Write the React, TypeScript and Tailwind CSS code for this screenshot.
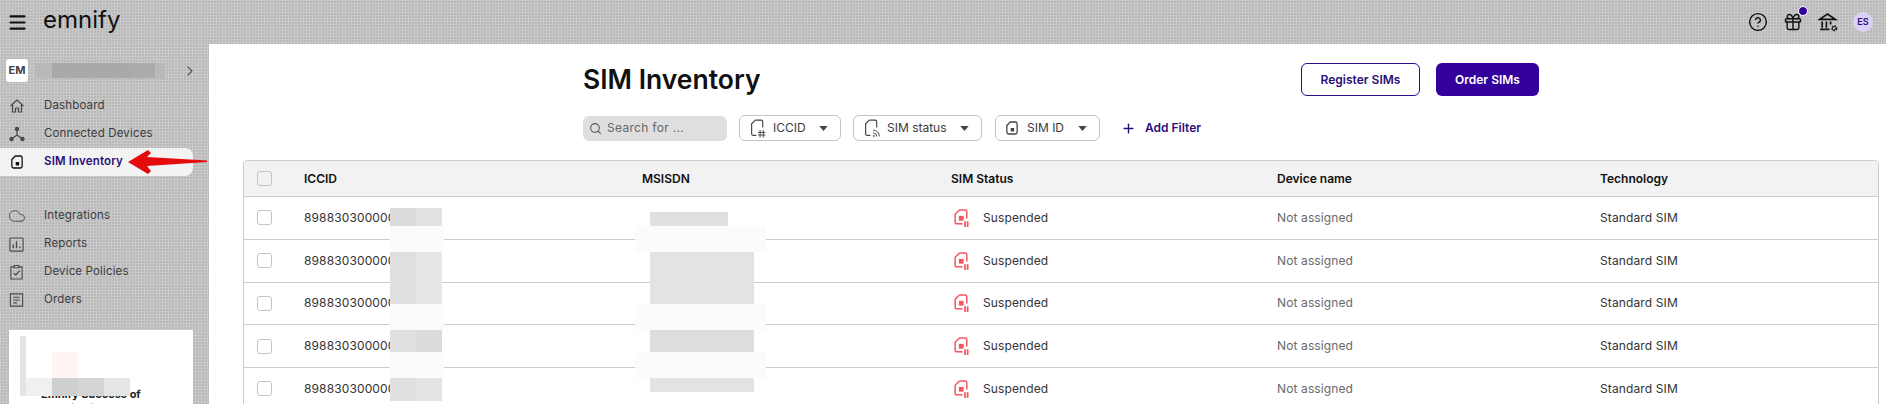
import { ChevronRight, CircleHelp, Cloud, Gift, Menu, Plus, Search } from "lucide-react";

const dotted =
  "bg-[#b8b8b8] bg-[linear-gradient(#c9c9c9_1px,transparent_1px),linear-gradient(90deg,#c9c9c9_1px,transparent_1px)] bg-[length:3px_3px]";

function SimIcon({ className = "" }: { className?: string }) {
  return (
    <svg viewBox="0 0 14 16" className={className} fill="none" stroke="currentColor" strokeWidth="1.5">
      <path d="M5 1h6a2 2 0 0 1 2 2v10a2 2 0 0 1-2 2H3a2 2 0 0 1-2-2V5z" strokeLinejoin="round" />
      <rect x="5.5" y="8" width="4" height="4" fill="currentColor" stroke="none" />
    </svg>
  );
}

function HomeIcon() {
  return (
    <svg viewBox="0 0 16 16" className="w-[16px] h-[16px]" fill="none" stroke="#4a4a4a" strokeWidth="1.2">
      <path d="M1.5 8 8 2l6.5 6M3.5 6.5V14h3v-4h3v4h3V6.5" strokeLinejoin="round" />
    </svg>
  );
}

function NodesIcon() {
  return (
    <svg viewBox="0 0 16 16" className="w-[16px] h-[16px]" fill="#4a4a4a" stroke="#4a4a4a" strokeWidth="1.2">
      <circle cx="8" cy="3" r="1.6" />
      <circle cx="2.5" cy="13" r="1.6" />
      <circle cx="13.5" cy="13" r="1.6" />
      <path d="M8 3v6M8 9l-5.5 4M8 9l5.5 4" fill="none" />
    </svg>
  );
}

function ReportsIcon() {
  return (
    <svg viewBox="0 0 16 16" className="w-[15px] h-[15px]" fill="none" stroke="#4a4a4a" strokeWidth="1.2">
      <rect x="1" y="1" width="14" height="14" rx="1" />
      <path d="M4.5 12V8M8 12V4.5M11.5 12v-2" strokeWidth="1.4" />
    </svg>
  );
}

function PolicyIcon() {
  return (
    <svg viewBox="0 0 16 16" className="w-[15px] h-[16px]" fill="none" stroke="#4a4a4a" strokeWidth="1.2">
      <path d="M5 2.5H2v13h12v-13h-3M5.5 1h5v2.5h-5z" />
      <path d="m5 9 2.2 2.2L11.5 6.5" strokeWidth="1.3" />
    </svg>
  );
}

function OrdersIcon() {
  return (
    <svg viewBox="0 0 16 16" className="w-[15px] h-[16px]" fill="none" stroke="#4a4a4a" strokeWidth="1.2">
      <path d="M1.5 1.5h13v13h-13z" />
      <path d="M4.5 5h7M4.5 8h7M4.5 11h4" />
    </svg>
  );
}

function BankIcon() {
  return (
    <svg viewBox="0 0 20 20" className="w-[21px] h-[21px]" fill="none" stroke="#111" strokeWidth="1.6">
      <path d="M1.5 7 9 2l7.5 5zM4 9v6M8 9v6M12 9v3M2 16.5h9" />
      <circle cx="15.5" cy="15.5" r="2" strokeWidth="1.8" strokeDasharray="1.5 .6" />
    </svg>
  );
}

function IccidIcon() {
  return (
    <svg viewBox="0 0 16 18" className="w-[17px] h-[19px]" fill="none" stroke="#444" strokeWidth="1.1">
      <path d="M5 1h5.5a1.5 1.5 0 0 1 1.5 1.5V8M5 1 1.5 4.5V14A1.5 1.5 0 0 0 3 15.5h3" />
      <path d="M9.5 10.5v7M12.5 10.5v7M7.5 12.7h7M7.5 15.2h7" strokeWidth=".9" />
    </svg>
  );
}

function StatusIcon() {
  return (
    <svg viewBox="0 0 16 18" className="w-[17px] h-[19px]" fill="none" stroke="#444" strokeWidth="1.1">
      <path d="M5 1h5.5a1.5 1.5 0 0 1 1.5 1.5V8M5 1 1.5 4.5V14A1.5 1.5 0 0 0 3 15.5h3" />
      <path d="M8.5 10.5a6 6 0 0 1 6 6M8.5 13a3.5 3.5 0 0 1 3.5 3.5" strokeWidth=".9" />
      <circle cx="9.3" cy="16" r=".8" fill="#444" stroke="none" />
    </svg>
  );
}

function SuspendedIcon() {
  return (
    <svg viewBox="0 0 14 17" className="w-[15px] h-[18px]" fill="none" stroke="#f4545f" strokeWidth="1.4">
      <path d="M5 1h5.5A1.5 1.5 0 0 1 12 2.5V9M5 1 1 5v7.5A1.5 1.5 0 0 0 2.5 14H8" />
      <rect x="4.5" y="6.5" width="4.5" height="4.5" fill="#f4545f" stroke="none" />
      <rect x="9.5" y="11.5" width="1.6" height="5.5" fill="#f4545f" stroke="none" />
      <rect x="12" y="11.5" width="1.6" height="5.5" fill="#f4545f" stroke="none" />
    </svg>
  );
}

function Caret() {
  return (
    <svg viewBox="0 0 10 6" className="w-[9px] h-[5px]" fill="#444">
      <path d="M0 0h10L5 6z" />
    </svg>
  );
}

function NavItem({ icon, label, active }: { icon: React.ReactNode; label: string; active?: boolean }) {
  return (
    <div
      className={`flex items-center h-[28px] w-[193px] rounded-r-lg ${
        active ? "bg-[#f3f3f3] text-[#2a0e78] font-semibold" : "text-[#3c3c3c]"
      }`}
    >
      <div className="w-[44px] flex justify-center pr-[11px]">{icon}</div>
      <span className="text-[11.5px] tracking-[0.15px]">{label}</span>
    </div>
  );
}

function FilterPill({ icon, label, className }: { icon: React.ReactNode; label: string; className: string }) {
  return (
    <div className={`flex items-center h-[26px] pl-[10px] border border-[#c4c4c4] rounded-md bg-white ${className}`}>
      {icon}
      <span className="ml-[6px] text-[12px] text-[#3c3c3c] flex-1">{label}</span>
      <div className="pr-[12px] flex">
        <Caret />
      </div>
    </div>
  );
}

const rows = [0, 1, 2, 3, 4];

function Cell({ className, children }: { className: string; children: React.ReactNode }) {
  return <div className={`shrink-0 ${className}`}>{children}</div>;
}

export default function App() {
  return (
    <div className="h-[404px] w-full overflow-hidden flex flex-col font-['Inter',sans-serif] bg-white">
      {/* Top bar */}
      <header className={`h-[44px] shrink-0 flex items-center ${dotted}`}>
        <Menu className="ml-[7px] w-[21px] h-[21px] text-[#111]" strokeWidth={2.4} />
        <span className="ml-[15px] text-[24px] leading-none font-normal text-[#111] -mt-[5px]">emnify</span>
        <div className="ml-auto flex items-center gap-[15px] pr-[13px]">
          <CircleHelp className="w-[20px] h-[20px] text-[#111]" strokeWidth={1.7} />
          <div className="relative">
            <Gift className="w-[20px] h-[20px] text-[#111]" strokeWidth={1.7} />
            <span className="absolute -top-[6px] -right-[5px] w-[10px] h-[10px] rounded-full bg-[#3300a0] border border-white" />
          </div>
          <BankIcon />
          <div className="w-[20px] h-[20px] ml-[-1px] rounded-full bg-[#ddd0f7] text-[#2a0e78] text-[9px] font-semibold flex items-center justify-center">
            ES
          </div>
        </div>
      </header>

      <div className="flex flex-1 min-h-0">
        {/* Sidebar */}
        <aside className={`w-[209px] shrink-0 relative ${dotted}`}>
          <div className="flex items-center pt-[6px] pl-[6px] h-[47px]">
            <div className="w-[22px] h-[23px] bg-white rounded-[3px] flex items-center justify-center text-[11px] font-bold text-[#444]">
              EM
            </div>
            <div className="ml-[7px] w-[130px] h-[15px] flex">
              <div className="w-[17px] bg-[#b9b9b9]" />
              <div className="w-[78px] bg-[#a9a9a9]" />
              <div className="w-[25px] bg-[#ababab]" />
              <div className="w-[10px] bg-[#b9b9b9]" />
            </div>
            <ChevronRight className="ml-[17px] w-[16px] h-[16px] text-[#555]" strokeWidth={1.6} />
          </div>
          <nav className="mt-[1px]">
            <NavItem icon={<HomeIcon />} label="Dashboard" />
            <NavItem icon={<NodesIcon />} label="Connected Devices" />
            <NavItem icon={<SimIcon className="w-[12px] h-[14px] text-[#111]" />} label="SIM Inventory" active />
            <div className="h-[26px]" />
            <NavItem icon={<Cloud className="w-[18px] h-[18px] text-[#4a4a4a]" strokeWidth={1.2} />} label="Integrations" />
            <NavItem icon={<ReportsIcon />} label="Reports" />
            <NavItem icon={<PolicyIcon />} label="Device Policies" />
            <NavItem icon={<OrdersIcon />} label="Orders" />
          </nav>
          {/* Promo card, cut off by the window */}
          <div className="absolute left-[9px] top-[286px] w-[184px] h-[80px] bg-white overflow-hidden">
            <div className="absolute left-[32px] top-[57px] text-[11px] font-bold leading-[14px] text-[#222] whitespace-nowrap">
              Emnify Success of
              <div className="font-medium">organization? Sout</div>
            </div>
            <div className="absolute left-[11px] top-[6px] w-[6px] h-[60px] bg-[#e4e4e4]" />
            <div className="absolute left-[43px] top-[22px] w-[26px] h-[26px] bg-[#fff5f5]" />
            <div className="absolute left-[17px] top-[48px] h-[18px] flex">
              <div className="w-[26px] bg-[#f0f0f0]" />
              <div className="w-[26px] bg-[#cfcfcf]" />
              <div className="w-[26px] bg-[#d5d5d5]" />
              <div className="w-[26px] bg-[#e5e5e5]" />
            </div>
          </div>
          {/* Red annotation arrow */}
          <svg viewBox="0 0 80 24" className="absolute left-[127px] top-[106px] w-[80px] h-[24px]">
            <path d="M1 12 21 0l3 3-4 4 60 3.5v1.5l-60 4 4 5-3 3z" fill="#e30b0b" />
          </svg>
        </aside>

        {/* Main content */}
        <main className="flex-1 min-w-0 pl-[34px] pr-[7px] pt-[19px]">
          <div className="w-[956px] mx-auto">
            <div className="flex items-center justify-between h-[33px]">
              <h1 className="text-[26.5px] font-semibold text-[#111] leading-none -mt-[1px]">SIM Inventory</h1>
              <div className="flex gap-[16px]">
                <button className="w-[119px] h-[33px] rounded-md border border-[#2f0a90] text-[#2a0e78] text-[12px] font-semibold bg-white">
                  Register SIMs
                </button>
                <button className="w-[103px] h-[33px] rounded-md bg-[#33009b] text-white text-[12px] font-semibold">
                  Order SIMs
                </button>
              </div>
            </div>
            <div className="flex items-center mt-[19px] h-[26px]">
              <div className="w-[144px] h-[25px] rounded-md bg-[#dfdfdf] flex items-center pl-[6px] text-[12px] text-[#666] tracking-[0.3px]">
                <Search className="w-[13px] h-[13px] text-[#555] mr-[5px]" strokeWidth={2} />
                Search for ...
              </div>
              <FilterPill icon={<IccidIcon />} label="ICCID" className="ml-[12px] w-[102px]" />
              <FilterPill icon={<StatusIcon />} label="SIM status" className="ml-[12px] w-[129px]" />
              <FilterPill
                icon={<SimIcon className="w-[12px] h-[14px] mr-[3px] text-[#444]" />}
                label="SIM ID"
                className="ml-[13px] w-[105px]"
              />
              <Plus className="ml-[21px] w-[15px] h-[15px] text-[#2a0e78]" strokeWidth={2.2} />
              <span className="ml-[9px] text-[12px] font-semibold text-[#2a0e78]">Add Filter</span>
            </div>
          </div>

          {/* SIM table */}
          <div className="relative mt-[19px] border border-[#cccccc] rounded-[4px] text-[12px] h-[300px]">
            <div className="flex items-center h-[36px] bg-[#f2f2f2] border-b border-[#cccccc] font-semibold text-[#111] rounded-t-[4px]">
              <Cell className="w-[60px] pl-[13px]">
                <div className="w-[15px] h-[15px] rounded-[3px] border border-[#c4c4c4]" />
              </Cell>
              <Cell className="w-[338px]">ICCID</Cell>
              <Cell className="w-[309px]">MSISDN</Cell>
              <Cell className="w-[326px]">SIM Status</Cell>
              <Cell className="w-[323px]">Device name</Cell>
              <Cell className="w-[200px]">Technology</Cell>
            </div>
            {rows.map((r) => (
              <div key={r} className="flex items-center h-[42.75px] border-b border-[#cccccc] text-[#333] tracking-[0.12px]">
                <Cell className="w-[60px] pl-[13px]">
                  <div className="w-[15px] h-[15px] rounded-[3px] border border-[#c4c4c4] bg-white" />
                </Cell>
                <Cell className="w-[338px]">898830300000</Cell>
                <Cell className="w-[309px]">&nbsp;</Cell>
                <Cell className="w-[326px] flex items-center pl-[3px]">
                  <SuspendedIcon />
                  <span className="ml-[14px]">Suspended</span>
                </Cell>
                <Cell className="w-[323px] text-[#6a6a6a]">Not assigned</Cell>
                <Cell className="w-[200px]">Standard SIM</Cell>
              </div>
            ))}

            {/* Pixelated redactions over ICCID and MSISDN columns */}
            <div className="absolute left-[146px] top-[47px] w-[52px] h-[18px] bg-[linear-gradient(90deg,#dcdcdc_50%,#e2e2e2_50%)]" />
            <div className="absolute left-[146px] top-[65px] w-[54px] h-[26px] bg-[#fbfbfb]" />
            <div className="absolute left-[146px] top-[91px] w-[52px] h-[52px] bg-[linear-gradient(90deg,#dfdfdf_50%,#e6e6e6_50%)]" />
            <div className="absolute left-[146px] top-[143px] w-[54px] h-[26px] bg-[#fbfbfb]" />
            <div className="absolute left-[146px] top-[169px] w-[52px] h-[22px] bg-[linear-gradient(90deg,#e0e0e0_50%,#dbdbdb_50%)]" />
            <div className="absolute left-[146px] top-[191px] w-[54px] h-[26px] bg-[#fbfbfb]" />
            <div className="absolute left-[146px] top-[217px] w-[52px] h-[23px] bg-[linear-gradient(90deg,#e0e0e0_50%,#e4e4e4_50%)]" />

            <div className="absolute left-[406px] top-[51px] w-[78px] h-[14px] bg-[#e0e0e0]" />
            <div className="absolute left-[391px] top-[65px] w-[131px] h-[26px] bg-[#fbfbfb]" />
            <div className="absolute left-[406px] top-[91px] w-[104px] h-[52px] bg-[#e3e3e3]" />
            <div className="absolute left-[391px] top-[143px] w-[131px] h-[26px] bg-[#fbfbfb]" />
            <div className="absolute left-[406px] top-[169px] w-[104px] h-[22px] bg-[#dddddd]" />
            <div className="absolute left-[391px] top-[191px] w-[131px] h-[26px] bg-[#fbfbfb]" />
            <div className="absolute left-[406px] top-[217px] w-[104px] h-[14px] bg-[#e3e3e3]" />
          </div>
        </main>
      </div>
    </div>
  );
}
